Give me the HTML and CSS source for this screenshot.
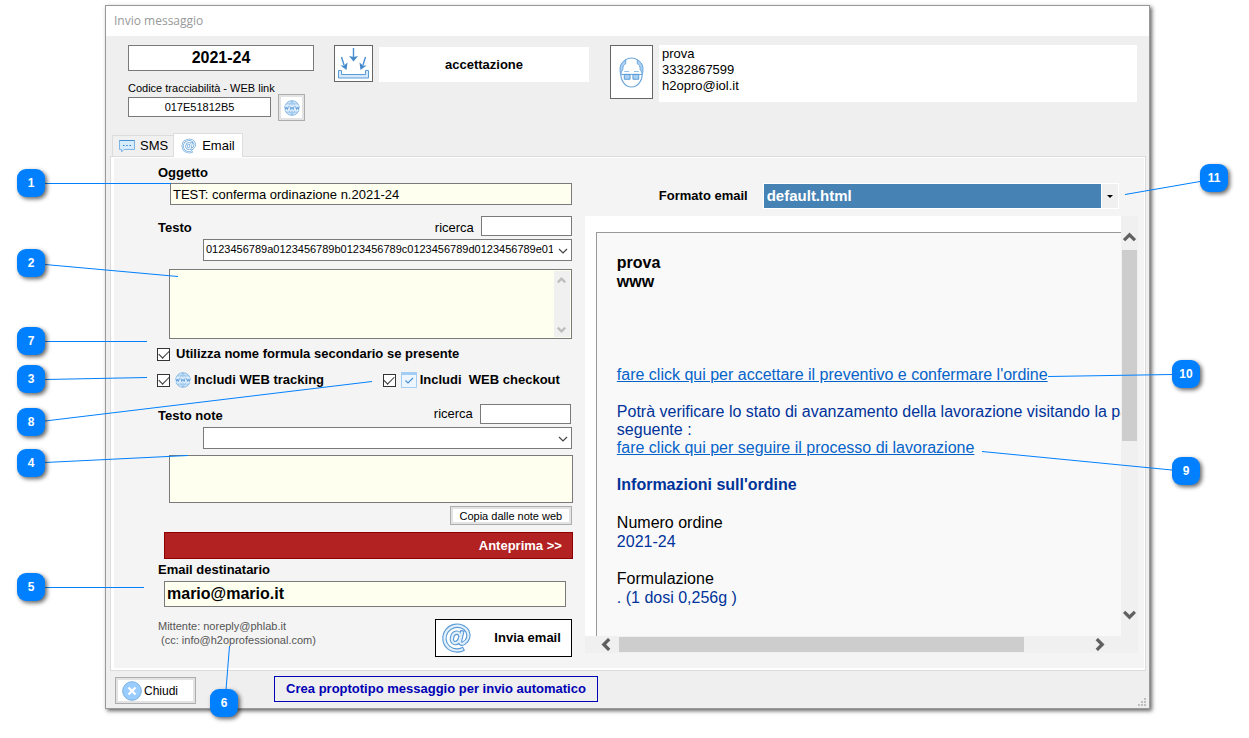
FILE: index.html
```html
<!DOCTYPE html>
<html lang="it">
<head>
<meta charset="utf-8">
<title>Invio messaggio</title>
<link rel="stylesheet" href="styles.css">
</head>
<body>
<svg class="defs" aria-hidden="true">
  <symbol id="globe" viewBox="0 0 16 16">
    <circle cx="8" cy="8" r="7.300" fill="#d6e9fa" stroke="#78afe0" stroke-width=".9"/>
    <path d="M8 1v14M2.500 3.800h11M2.500 12.200h11M8 1Q1.500 8 8 15M8 1Q14.500 8 8 15" fill="none" stroke="#8bbbe6" stroke-width=".7"/>
    <path d="M0 5.500H16V10.500H0Z" fill="#e2f0fc"/>
    <path d="M.8 6.300l.9 3.200.9-2.400.9 2.400.9-3.200M5.900 6.300l.9 3.200 1.200-2.400 1.200 2.400.9-3.200M11.600 6.300l.9 3.200.9-2.400.9 2.400.9-3.200" fill="none" stroke="#4a90d4" stroke-width=".8"/>
  </symbol>
  <symbol id="at" viewBox="0 0 32 32">
    <g fill="none" stroke-linecap="square">
      <g stroke="#5b9bd5" stroke-width="4.400"><path d="M19.500 14.500C19 9.500 12.500 9 11 15.500C9.700 22.500 17 23 19 16.500"/><path d="M21 10.500L19 19C18.600 22 21 22.300 23 21C27 18.500 28.500 14 26.500 9.500C24 4.500 18 3 13.500 4C7 5.500 3 11 3.500 17.500C4 24 9.500 28.500 16 28.500C18 28.500 19.500 28.300 21 27.500"/></g>
      <g stroke="#e2f0fc" stroke-width="2.200"><path d="M19.500 14.500C19 9.500 12.500 9 11 15.500C9.700 22.500 17 23 19 16.500"/><path d="M21 10.500L19 19C18.600 22 21 22.300 23 21C27 18.500 28.500 14 26.500 9.500C24 4.500 18 3 13.500 4C7 5.500 3 11 3.500 17.500C4 24 9.500 28.500 16 28.500C18 28.500 19.500 28.300 21 27.500"/></g>
    </g>
  </symbol>
  <symbol id="chev" viewBox="0 0 12 12"><path d="M2 4l4 4 4-4" fill="none" stroke="currentColor" stroke-width="1.200"/></symbol>
  <symbol id="arrow" viewBox="0 0 12 12"><path d="M1 3.500L6 8.500L11 3.500" fill="none" stroke="currentColor" stroke-width="3"/></symbol>
</svg>

<main class="window">
  <header class="titlebar">Invio messaggio</header>

  <section class="summary">
    <div class="order">
      <input class="box order-no" value="2021-24" aria-label="Numero ordine" readonly>
      <label class="code-label" for="code">Codice tracciabilità - WEB link</label>
      <div class="code-row">
        <input class="box code" id="code" value="017E51812B5" readonly>
        <button class="soft-btn web-btn" aria-label="Apri link web"><svg class="i16"><use href="#globe"/></svg></button>
      </div>
    </div>
    <button class="icon-btn inbox-btn" aria-label="Accettazione">
      <svg width="33" height="33" viewBox="0 0 33 33">
        <path d="M1.500 23.500h3v4h24v-4h3v7.500h-30z" fill="#d6e9fa" stroke="#5b9bd5"/>
        <g stroke="#4a90d4" stroke-width="1.400" fill="#4489cc"><path d="M16.500 1v9M4.500 10l2.500 8M28.500 10l-2.500 8"/><path stroke="none" d="M12 9l4.500 1 4.500-1-4.500 5.500zM3.500 18.500l3.500 0 3.500-3-1 7.500zM29.500 18.500l-3.500 0-3.500-3 1 7.500z"/></g>
      </svg>
    </button>
    <div class="status">accettazione</div>
    <button class="icon-btn face-btn" aria-label="Cliente">
      <svg width="27" height="31" viewBox="0 0 28 32">
        <path d="M3 15C2 25 8 31 14 31S26 25 25 15V9C22 3 18 1 14 1S6 3 3 9z" fill="#fff" stroke="#6ba6dc" stroke-width="1.200"/>
        <path d="M8 3C2 6 1.500 11 2.500 17L5 13C5 9 6 8 8 7zM20 3C26 6 26.500 11 25.500 17L23 13C23 9 22 8 20 7z" fill="#a9d0f2" stroke="#6ba6dc"/>
        <path d="M6.500 18h6v5h-6zM15.500 18h6v5h-6z" fill="#a9d0f2" stroke="#5b9bd5"/>
        <path d="M3 18h22" stroke="#5b9bd5"/><path d="M6.500 15h5M16.500 15h5" stroke="#8bbbe6"/>
      </svg>
    </button>
    <address class="customer">prova<br>3332867599<br>h2opro@iol.it</address>
  </section>

  <nav class="tabs">
    <button class="tab">
      <svg width="16" height="16" viewBox="0 0 16 16"><path d="M.500 2.500h15v9H5l-2.500 2.500v-2.500h-2z" fill="#d6ecfc" stroke="#7db4e4"/><path d="M.500 2.500h15" stroke="#3f8fd0"/><path d="M4 7.500h1.500M7.200 7.500h1.500M10.500 7.500h1.500" stroke="#2f7dc8" stroke-width="1.200"/></svg>
      SMS</button>
    <button class="tab active"><svg class="i16"><use href="#at"/></svg>Email</button>
  </nav>

  <section class="panel">
    <div class="panel-body">
      <form class="form">
        <label class="cap" for="subject">Oggetto</label>
        <input class="box yellow subject" id="subject" value="TEST: conferma ordinazione n.2021-24">

        <div class="search-row first">
          <label class="cap" for="body">Testo</label>
          <label class="find-label" for="find1">ricerca</label>
          <input class="box find" id="find1">
        </div>
        <div class="combo">
          <select class="box" aria-label="Modello testo"><option>0123456789a0123456789b0123456789c0123456789d0123456789e0123456789</option></select>
          <svg><use href="#chev"/></svg>
        </div>
        <div class="memo">
          <textarea class="box yellow" id="body"></textarea>
          <div class="memo-bar"><svg class="up"><use href="#arrow"/></svg><svg><use href="#arrow"/></svg></div>
        </div>

        <div class="checks">
          <label class="check"><input type="checkbox" checked>Utilizza nome formula secondario se presente</label>
          <div class="check-pair">
            <label class="check"><input type="checkbox" checked><svg class="i16"><use href="#globe"/></svg>Includi WEB tracking</label>
            <label class="check second"><input type="checkbox" checked><svg width="16" height="16" viewBox="0 0 16 16"><path d="M.500 1h15v14.500H.500z" fill="#edf6fe" stroke="#a3cdf2"/><path d="M0 0h16v3H0z" fill="#a3cdf2"/><path d="M4.500 8.500l2.500 2.500 5-5" fill="none" stroke="#4a90d4" stroke-width="1.200"/></svg>Includi&nbsp; WEB checkout</label>
          </div>
        </div>

        <div class="search-row">
          <label class="cap" for="notes">Testo note</label>
          <label class="find-label" for="find2">ricerca</label>
          <input class="box find" id="find2">
        </div>
        <div class="combo">
          <select class="box" aria-label="Modello note"><option></option></select>
          <svg><use href="#chev"/></svg>
        </div>
        <textarea class="box yellow notes" id="notes"></textarea>
        <button type="button" class="soft-btn copy-btn">Copia dalle note web</button>
        <button type="button" class="preview-btn">Anteprima &gt;&gt;</button>
        <label class="cap" for="to">Email destinatario</label>
        <input class="box yellow to" id="to" value="mario@mario.it">
        <div class="send-row">
          <p class="sender">Mittente: noreply@phlab.it<br>&nbsp;(cc: info@h2oprofessional.com)</p>
          <button type="button" class="send-btn"><svg width="32" height="32"><use href="#at"/></svg>Invia email</button>
        </div>
      </form>

      <section class="preview">
        <div class="format-row">
          <label for="format">Formato email</label>
          <div class="format">
            <select id="format"><option>default.html</option></select>
            <span class="drop"></span>
          </div>
        </div>
        <div class="viewer">
          <div class="sheet">
            <article class="mail">
              <p class="who">prova<br>www</p>
              <p class="accept"><a href="#">fare click qui per accettare il preventivo e confermare l'ordine</a></p>
              <p class="follow">Potrà verificare lo stato di avanzamento della lavorazione visitando la pag<br>seguente :<br><a href="#">fare click qui per seguire il processo di lavorazione</a></p>
              <h2>Informazioni sull'ordine</h2>
              <dl><dt>Numero ordine</dt><dd>2021-24</dd></dl>
              <dl><dt>Formulazione</dt><dd>. (1 dosi 0,256g )</dd></dl>
            </article>
          </div>
          <div class="vbar"><svg class="up"><use href="#arrow"/></svg><span class="thumb"></span><svg class="end"><use href="#arrow"/></svg></div>
          <div class="hbar"><svg class="left"><use href="#arrow"/></svg><span class="thumb"></span><svg class="right end"><use href="#arrow"/></svg></div>
        </div>
      </section>
    </div>
  </section>

  <footer class="footer">
    <button class="soft-btn close-btn">
      <svg width="20" height="20" viewBox="0 0 20 20"><circle cx="10" cy="10" r="9.300" fill="#99ccff" stroke="#78aee0"/><path d="M6.500 6.500l7 7M13.500 6.500l-7 7" stroke="#fff" stroke-width="2.200"/></svg>
      Chiudi</button>
    <button class="proto-btn">Crea proptotipo messaggio per invio automatico</button>
    <svg class="grip" width="9" height="9"><path d="M6 0h2v2h-2zM3 3h2v2h-2zM6 3h2v2h-2zM0 6h2v2h-2zM3 6h2v2h-2zM6 6h2v2h-2z" fill="#bfbfbf"/></svg>
  </footer>
</main>

<svg class="leaders" aria-hidden="true">
  <path d="M45 183.500H171M45 264.500L178 276.500M45 341.500H147M45 379.500L147 377.500M45 421L372 381.500M45 462.500L188 455.500M45 587.500H144M226 690L229.500 646M1200 181.500L1125 194.500M1172 374.500L1048 376.500M1172 470L982 451.500"/>
</svg>
<span class="pin p1">1</span><span class="pin p2">2</span><span class="pin p7">7</span><span class="pin p3">3</span>
<span class="pin p8">8</span><span class="pin p4">4</span><span class="pin p5">5</span><span class="pin p6">6</span>
<span class="pin p11">11</span><span class="pin p10">10</span><span class="pin p9">9</span>
</body>
</html>
```
FILE: styles.css
```css
* { box-sizing: border-box; }
body {
  position: relative;
  margin: 0;
  padding: 5px 99px 28px 105px;
  background: #fff;
  color: #000;
  font: 13px/16px "Liberation Sans", Arial, sans-serif;
}
p, h2, dl, dd { margin: 0; }
button, input, select, textarea { font: inherit; color: inherit; margin: 0; }
button { cursor: pointer; }
svg { flex: none; display: block; }
.defs { position: absolute; width: 0; height: 0; }
.i16 { width: 16px; height: 16px; }

.window {
  display: flex;
  flex-direction: column;
  background: #efefef;
  border: 1px solid #999;
  box-shadow: 2px 2px 4px rgba(0, 0, 0, .6);
}
.titlebar {
  height: 30px;
  padding: 0 8px;
  background: #fff;
  color: #999;
  font: 12px/30px "Open Sans", "Noto Sans", sans-serif;
}

/* shared controls */
.box {
  display: block;
  width: 100%;
  padding: 0 2px;
  border: 1px solid #7a7a7a;
  border-radius: 0;
  background: #fff;
  outline: 0;
  resize: none;
}
.yellow { background: #ffffef; }
.soft-btn {
  padding: 0;
  border: 1px solid #adadad;
  box-shadow: inset 0 0 0 2px #e3e3e3;
  background: #fff;
}
.icon-btn {
  display: grid;
  place-items: center;
  padding: 0;
  border: 1px solid #666;
  background: #fff;
}

/* order summary */
.summary {
  display: flex;
  align-items: flex-start;
  height: 97px;
  padding: 9px 12px 0 22px;
}
.order { width: 186px; margin-right: 20px; }
.order-no { height: 26px; text-align: center; font-size: 16px; font-weight: bold; }
.code-label { display: block; margin-top: 11px; font-size: 11px; line-height: 12px; white-space: nowrap; }
.code-row { display: flex; align-items: flex-start; gap: 7px; }
.code { width: 143px; height: 20px; margin-top: 3px; text-align: center; font-size: 11px; }
.web-btn { width: 27px; height: 27px; display: grid; place-items: center; }
.inbox-btn { width: 39px; height: 37px; }
.status {
  width: 210px;
  margin: 2px 21px 0 6px;
  background: #fff;
  text-align: center;
  font-weight: bold;
  line-height: 35px;
}
.face-btn { width: 43px; height: 54px; margin-right: 6px; }
.customer {
  flex: 1;
  height: 57px;
  padding: 1px 3px;
  background: #fff;
  font-style: normal;
}

/* tabs */
.tabs { display: flex; align-items: flex-end; padding-left: 6px; height: 24px; margin-bottom: -1px; z-index: 1; }
.tab {
  display: flex;
  align-items: center;
  gap: 5px;
  height: 22px;
  padding: 0 5px 0 6px;
  border: 1px solid #dcdcdc;
  border-right: 0;
  background: #f0f0f0;
}
.tab.active { height: 24px; padding: 0 7px; border-right: 1px solid #dcdcdc; border-bottom: 0; background: #fff; }

.panel { margin: 0 3px 0 4px; padding: 1px 1px 2px 3px; border: 1px solid #dcdcdc; background: #fff; }
.panel-body {
  display: grid;
  grid-template-columns: minmax(0, 3fr) minmax(0, 4fr);
  gap: 12px;
  padding: 6px 6px 11px 44px;
  background: #f4f4f4;
}

/* form */
.form { display: flex; flex-direction: column; }
.cap { font-weight: bold; line-height: 18px; }
.subject { width: auto; height: 22px; margin: 1px 1px 0 12px; }
.search-row { display: flex; align-items: center; margin: 15px 2px 3px 0; }
.search-row.first { align-items: flex-end; margin: 11px 1px 3px 0; }
.search-row .cap { align-self: flex-end; line-height: 16px; }
.find-label { margin-left: auto; margin-right: 7px; }
.find { width: 91px; height: 20px; }
.combo { position: relative; margin: 0 1px 0 45px; }
.combo select { height: 22px; padding: 0 18px 2px 2px; appearance: none; font-size: 11px; }
.combo svg { position: absolute; right: 3px; top: 6px; width: 12px; height: 12px; color: #444; pointer-events: none; }
.memo { position: relative; height: 70px; margin: 8px 1px 0 11px; }
.memo textarea { height: 100%; }
.memo-bar {
  position: absolute;
  inset: 2px 2px 2px auto;
  width: 16px;
  display: flex;
  flex-direction: column;
  justify-content: space-between;
  align-items: center;
  padding: 5px 0 3px;
  background: #f0f0f0;
  color: #bdbdbd;
}
.memo-bar svg { width: 9px; height: 9px; }
.up { transform: rotate(180deg); }
.checks { display: flex; flex-direction: column; gap: 8px; margin: 6px 0 0 -1px; }
.check-pair { display: flex; }
.check { display: flex; align-items: center; gap: 6px; height: 18px; font-weight: bold; white-space: nowrap; }
.check svg { margin: 0 -3px 0 -1px; }
.second { margin-left: auto; margin-right: 13px; }
.check input {
  appearance: none;
  flex: none;
  width: 13px;
  height: 13px;
  border: 1px solid #333;
  background: #fff;
  display: grid;
  place-items: center;
}
.check input:checked::before {
  content: "";
  width: 9px;
  height: 5px;
  margin-top: -3px;
  border: solid #333;
  border-width: 0 0 1px 1px;
  transform: rotate(-45deg);
}
.notes { width: auto; height: 48px; margin: 6px 0 0 11px; }
.copy-btn { align-self: flex-end; width: 122px; height: 19px; margin: 3px 1px 0 0; font-size: 11px; line-height: 14px; }
.preview-btn {
  height: 27px;
  margin: 7px 0 2px 6px;
  padding: 0 10px;
  border: 1px solid #8b0000;
  background: #b22222;
  color: #fff;
  text-align: right;
  font-weight: bold;
}
.to { width: auto; height: 26px; margin: 2px 7px 0 6px; font-size: 16px; font-weight: bold; }
.send-row { display: flex; justify-content: space-between; align-items: flex-start; margin: 12px 1px 0 0; }
.sender { color: #555; font-size: 11px; line-height: 14px; }
.send-btn {
  display: flex;
  align-items: center;
  justify-content: space-between;
  width: 137px;
  height: 38px;
  padding: 0 10px 0 5px;
  border: 1px solid #000;
  background: #fff;
  font-weight: bold;
}

/* preview */
.preview { display: flex; flex-direction: column; }
.format-row {
  display: flex;
  align-items: center;
  gap: 15px;
  margin: 19px 19px 7px 74px;
  font-weight: bold;
  white-space: nowrap;
}
.format { flex: 1; display: flex; height: 26px; border: 1px solid #fff; background: #f0f0f0; }
.format select {
  flex: 1;
  min-width: 0;
  padding: 0 3px;
  appearance: none;
  border: 0;
  border-radius: 0;
  background: #4682b4;
  color: #fff;
  font-size: 15px;
  font-weight: bold;
}
.drop { display: grid; place-items: center; width: 17px; border-left: 1px solid #fff; }
.drop::before { content: ""; border: solid transparent; border-width: 3px 3px 0; border-top-color: #000; }
.viewer {
  flex: 1;
  display: grid;
  grid-template: minmax(0, 1fr) 17px / minmax(0, 1fr) 17px;
  margin-bottom: 4px;
  background: #f0f0f0;
}
.sheet { padding: 16px 0 0 11px; background: #fff; overflow: hidden; }
.mail {
  height: 100%;
  padding: 20px 0 0 20px;
  border: solid #999;
  border-width: 1px 0 0 1px;
  background: #f9f9f9;
  color: #003399;
  font-size: 16px;
  line-height: 18px;
  white-space: nowrap;
}
.mail a { color: #0563c9; }
.who { color: #000; font-weight: bold; line-height: 19px; }
.accept { margin-top: 75px; }
.follow { margin-top: 19px; }
.mail h2 { margin: 19px 0; font-size: 16px; }
.mail dl { margin-bottom: 18px; line-height: 19px; }
.mail dt { color: #000; }
.vbar, .hbar { display: flex; align-items: center; color: #606060; }
.vbar { flex-direction: column; padding: 15px 0; }
.hbar { padding: 0 15px; }
.vbar svg, .hbar svg { width: 13px; height: 13px; }
.end { margin-top: auto; }
.hbar .end { margin: 0 0 0 auto; }
.left { transform: rotate(90deg); }
.right { transform: rotate(-90deg); }
.thumb { background: #cdcdcd; }
.vbar .thumb { width: 15px; height: 49%; flex: none; margin-top: 6px; }
.hbar .thumb { height: 15px; width: 80%; flex: none; margin-left: 6px; }

/* footer */
.footer { display: flex; align-items: flex-start; height: 37px; padding: 5px 3px 0 9px; }
.close-btn { display: flex; align-items: center; gap: 2px; width: 81px; height: 27px; margin: 1px 78px 0 0; padding: 0 6px; font-size: 12px; }
.proto-btn { width: 324px; height: 26px; padding: 0 7px; border: 1px solid #0000b4; background: #efefef; color: #0000b4; font-weight: bold; white-space: nowrap; }
.grip { align-self: flex-end; margin: 0 -1px 1px auto; }

/* numbered callouts laid over the window */
.leaders { position: absolute; inset: 0; width: 100%; height: 100%; pointer-events: none; z-index: 2; }
.leaders path { fill: none; stroke: #0080ff; }
.pin {
  position: absolute;
  z-index: 3;
  width: 28px;
  height: 28px;
  border-radius: 9px;
  background: #0080ff;
  box-shadow: 2px 2px 4px rgba(0, 0, 0, .6);
  color: #fff;
  text-align: center;
  font-weight: bold;
  font-size: 12px;
  line-height: 28px;
}
.p1 { left: 17px; top: 169px; }
.p2 { left: 17px; top: 249px; }
.p7 { left: 17px; top: 327px; }
.p3 { left: 17px; top: 365px; }
.p8 { left: 17px; top: 408px; }
.p4 { left: 17px; top: 449px; }
.p5 { left: 17px; top: 573px; }
.p6 { left: 210px; top: 689px; }
.p11 { left: 1200px; top: 164px; }
.p10 { left: 1172px; top: 360px; }
.p9 { left: 1172px; top: 457px; }
```
